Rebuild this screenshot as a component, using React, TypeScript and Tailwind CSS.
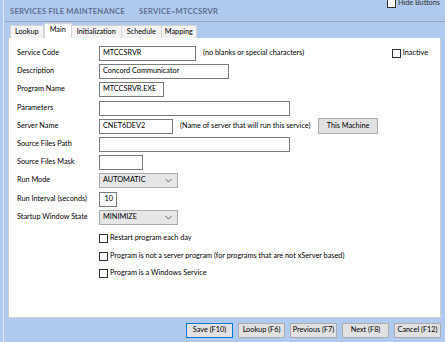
import React from "react";

const font = { fontFamily: 'Lato, "Noto Sans", Arial, sans-serif' };

function Box() {
  return <span className="inline-block w-[9px] h-[9px] border border-[#333333] bg-white shrink-0" />;
}

function Chevron() {
  return (
    <svg width="7" height="5" viewBox="0 0 7 5" className="shrink-0">
      <path d="M0.5 1 L3.5 4 L6.5 1" fill="none" stroke="#555" strokeWidth="0.9" />
    </svg>
  );
}

function Input({ w, value, right }: { w: string; value?: string; right?: boolean }) {
  return (
    <div
      className={`${w} h-[15px] shrink-0 border border-[#7a7a7a] bg-white flex items-center px-[3px] text-[7.3px] text-black ${
        right ? "justify-end" : ""
      }`}
    >
      {value}
    </div>
  );
}

function Select({ value }: { value: string }) {
  return (
    <div className="w-[79px] h-[15px] border border-[#acacac] bg-[#e6e6e6] flex items-center justify-between px-[3px] text-[7.3px] text-black">
      <span>{value}</span>
      <span className="pr-[2px] flex items-center">
        <Chevron />
      </span>
    </div>
  );
}

function Row({ label, children }: { label: string; children?: React.ReactNode }) {
  return (
    <div className="h-[18.2px] flex items-start">
      <div className="w-[82px] shrink-0 h-[15px] flex items-center text-[7.3px] text-black">{label}</div>
      <div className="flex-1 flex items-center h-[15px]">{children}</div>
    </div>
  );
}

function Check({ label }: { label: string }) {
  return (
    <div className="h-[17.5px] flex items-center pl-[82px] gap-[2px] text-[7.3px] text-black">
      <Box />
      <span>{label}</span>
    </div>
  );
}

function Btn({ children, def }: { children: React.ReactNode; def?: boolean }) {
  return (
    <div
      className={`w-[47px] h-[15px] flex items-center justify-center bg-[#e1e1e1] text-[7.3px] text-black border ${
        def ? "border-[#0078d7]" : "border-[#adadad]"
      }`}
    >
      {children}
    </div>
  );
}

export default function App() {
  return (
    <div className="w-[445px] h-[342px] bg-[#afcaee] overflow-hidden flex" style={font}>
      <div className="w-[8px] h-full shrink-0 flex">
        <div className="ml-[3px] w-px h-full bg-[#dfe8f5]" />
      </div>
      <div className="flex-1 flex flex-col">
        <div className="h-[21px] flex items-start justify-between">
          <div className="pl-[2px] pt-[6px] text-[7.6px] font-bold text-[#5f6f8e] tracking-[0.25px] flex gap-[14px]">
            <span>SERVICES FILE MAINTENANCE</span>
            <span>SERVICE=MTCCSRVR</span>
          </div>
          <div className="-mt-[2px] mr-[5px] flex items-center gap-[2px] text-[7.3px] text-[#333]">
            <Box />
            <span>Hide Buttons</span>
          </div>
        </div>
        <div className="h-px bg-[#97a6bd] -ml-[3px]" />
        <div className="h-[16px] flex items-end pl-[2px] text-[7.3px] text-black">
          <div className="h-[13px] px-[4px] flex items-center bg-[#f3f3f3] border border-b-0 border-[#d4d4d4]">Lookup</div>
          <div className="h-[15px] px-[5px] flex items-start pt-[1px] bg-white border border-b-0 border-[#d4d4d4]">Main</div>
          <div className="h-[13px] px-[5px] flex items-center bg-[#f3f3f3] border border-b-0 border-l-0 border-[#d4d4d4]">Initialization</div>
          <div className="h-[13px] px-[5px] flex items-center bg-[#f3f3f3] border border-b-0 border-l-0 border-[#d4d4d4]">Schedule</div>
          <div className="h-[13px] px-[3px] flex items-center bg-[#f3f3f3] border border-b-0 border-l-0 border-[#d4d4d4]">Mapping</div>
        </div>
        <div className="h-[280px] mr-[4px] bg-white border border-t-0 border-[#d0d0d0] pt-[8px] pl-[8px] flex flex-col">
          <Row label="Service Code">
            <Input w="w-[97px]" value="MTCCSRVR" />
            <span className="ml-[7px] text-[7.3px] text-black">(no blanks or special characters)</span>
            <div className="ml-auto mr-[12px] flex items-center gap-[2px] text-[7.3px] text-black">
              <Box />
              <span>Inactive</span>
            </div>
          </Row>
          <Row label="Description">
            <Input w="w-[130px]" value="Concord Communicator" />
          </Row>
          <Row label="Program Name">
            <Input w="w-[65px]" value="MTCCSRVR.EXE" />
          </Row>
          <Row label="Parameters">
            <Input w="w-[191px]" />
          </Row>
          <Row label="Server Name">
            <Input w="w-[74px]" value="CNET6DEV2" />
            <span className="ml-[7px] w-[128px] shrink-0 whitespace-nowrap text-[7.3px] text-black">
              (Name of server that will run this service)
            </span>
            <div className="ml-[10px] w-[60px] h-[16px] flex items-center justify-center bg-[#e1e1e1] border border-[#adadad] text-[7.3px] text-black">
              This Machine
            </div>
          </Row>
          <Row label="Source Files Path">
            <Input w="w-[191px]" />
          </Row>
          <Row label="Source Files Mask">
            <Input w="w-[44px]" />
          </Row>
          <Row label="Run Mode">
            <Select value="AUTOMATIC" />
          </Row>
          <Row label="Run Interval (seconds)">
            <Input w="w-[18px]" value="10" right />
          </Row>
          <Row label="Startup Window State">
            <Select value="MINIMIZE" />
          </Row>
          <div className="h-[2px]" />
          <Check label="Restart program each day" />
          <Check label="Program is not a server program (for programs that are not xServer based)" />
          <Check label="Program is a Windows Service" />
        </div>
        <div className="flex-1 flex items-center justify-end gap-[5px] pr-[4px]">
          <Btn def>Save (F10)</Btn>
          <Btn>Lookup (F6)</Btn>
          <Btn>Previous (F7)</Btn>
          <Btn>Next (F8)</Btn>
          <Btn>Cancel (F12)</Btn>
        </div>
      </div>
    </div>
  );
}
